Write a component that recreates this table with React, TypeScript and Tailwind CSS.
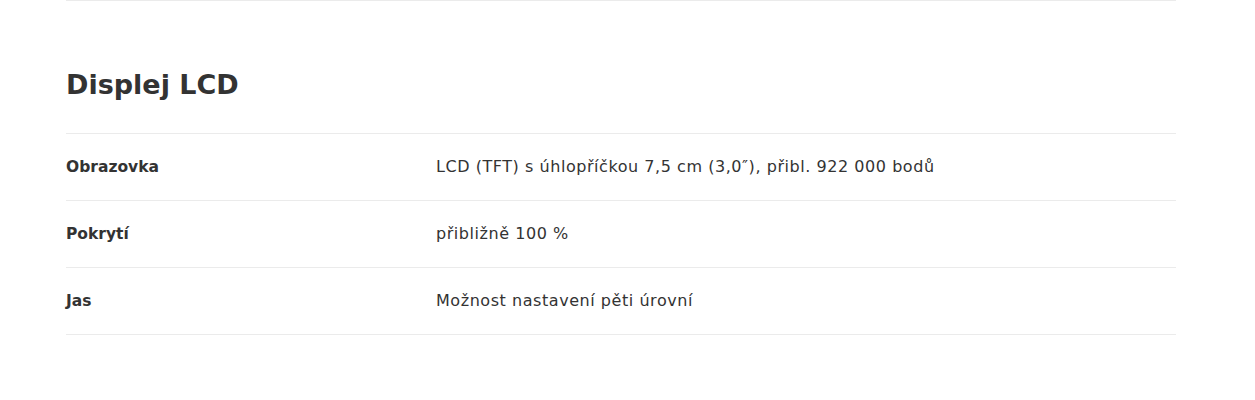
import React from 'react';

const rows = [
  { label: 'Obrazovka', value: 'LCD (TFT) s úhlopříčkou 7,5 cm (3,0″), přibl. 922 000 bodů' },
  { label: 'Pokrytí', value: 'přibližně 100 %' },
  { label: 'Jas', value: 'Možnost nastavení pěti úrovní' },
];

export default function App() {
  return (
    <div className="min-h-[400px] bg-white text-[#333333]" style={{ fontFamily: '"DejaVu Sans", sans-serif' }}>
      <div className="ml-[66px] w-[1110px]">
        <div className="border-t border-[#ebebeb] pt-[62px]">
          <h2 className="text-[27px] font-bold leading-[44px]">Displej LCD</h2>
          <dl className="mt-[26px] border-t border-[#ebebeb]">
            {rows.map((r) => (
              <div key={r.label} className="grid grid-cols-[370px_1fr] border-b border-[#ebebeb] h-[67px] pt-[22px]">
                <dt className="text-[15.5px] font-bold leading-[22px]">{r.label}</dt>
                <dd className="text-[16px] leading-[22px] tracking-[0.55px]">{r.value}</dd>
              </div>
            ))}
          </dl>
        </div>
      </div>
    </div>
  );
}
